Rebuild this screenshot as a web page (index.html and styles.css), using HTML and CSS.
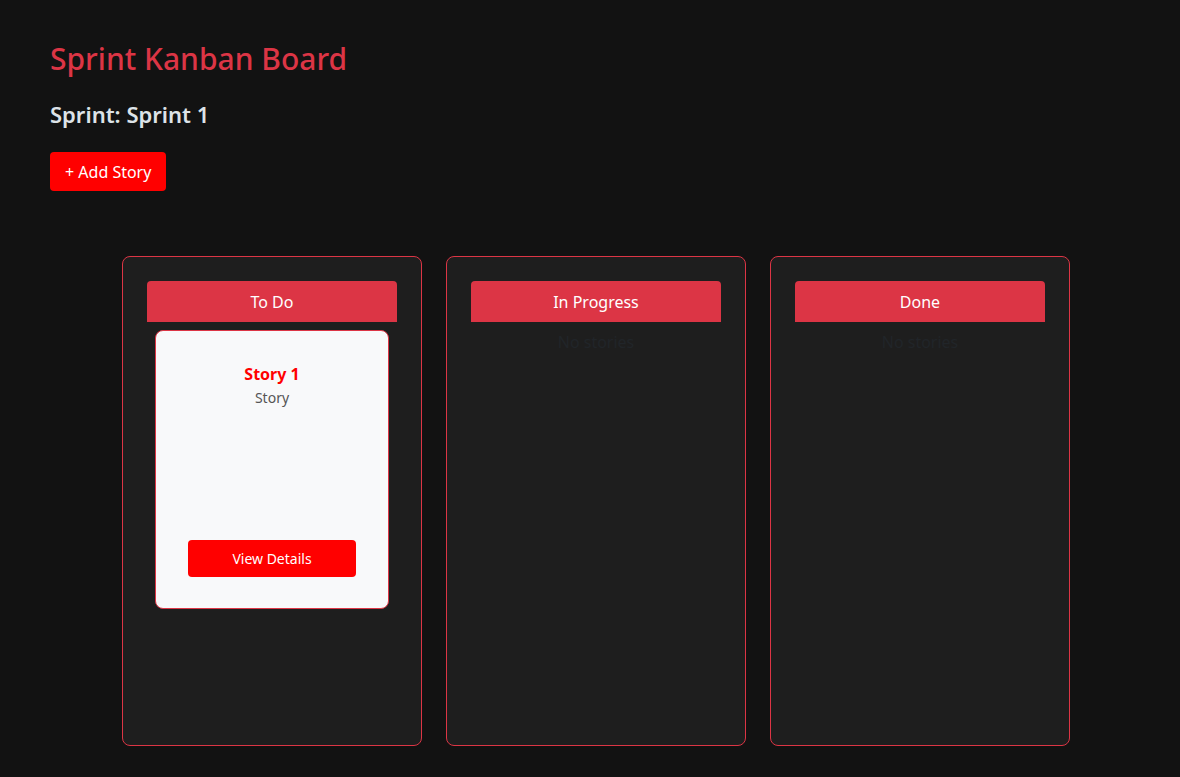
FILE: index.html
```html
<!DOCTYPE html>
<html lang="en">
<head>
<meta charset="utf-8">
<title>Sprint Kanban Board</title>
<link rel="stylesheet" href="styles.css">
</head>
<body>
<div class="page">
  <h1 class="title">Sprint Kanban Board</h1>
  <h2 class="subtitle">Sprint: Sprint 1</h2>
  <button class="add-btn">+ Add Story</button>
  <div class="board">
    <section class="column">
      <div class="col-header">To Do</div>
      <div class="card">
        <div class="card-body">
          <div class="card-title">Story 1</div>
          <div class="card-type">Story</div>
        </div>
        <button class="details-btn">View Details</button>
      </div>
    </section>
    <section class="column">
      <div class="col-header">In Progress</div>
      <div class="empty">No stories</div>
    </section>
    <section class="column">
      <div class="col-header">Done</div>
      <div class="empty">No stories</div>
    </section>
  </div>
</div>
</body>
</html>
```

FILE: styles.css
```css
* { box-sizing: border-box; }
html, body {
  margin: 0;
  padding: 0;
  background: #121212;
}
body {
  font-family: "Noto Sans", "Open Sans", "Liberation Sans", sans-serif;
  color: #e0e0e0;
}
.page {
  padding: 41px 50px 0 50px;
}
.title {
  margin: 0;
  font-size: 30px;
  font-weight: 500;
  line-height: 36px;
  color: #dc3545;
}
.subtitle {
  margin: 24px 0 0 0;
  font-size: 22px;
  font-weight: 600;
  line-height: 27px;
  color: #dde3e8;
}
.add-btn {
  margin-top: 24px;
  height: 39px;
  padding: 0 15px;
  border: none;
  border-radius: 4px;
  background: #ff0000;
  color: #ffffff;
  font-family: inherit;
  font-size: 16px;
  cursor: pointer;
}
.board {
  display: flex;
  justify-content: center;
  gap: 24px;
  margin-top: 65px;
  padding-left: 12px;
}
.column {
  width: 300px;
  height: 490px;
  padding: 24px;
  background: #1e1e1e;
  border: 1px solid #dc3545;
  border-radius: 8px;
}
.col-header {
  height: 41px;
  display: flex;
  align-items: center;
  justify-content: center;
  background: #dc3545;
  color: #ffffff;
  font-size: 16px;
  border-radius: 4px 4px 0 0;
}
.card {
  margin: 8px;
  height: 279px;
  padding: 31px 32px 31px;
  background: #f8f9fa;
  border: 1px solid #dc3545;
  border-radius: 8px;
  display: flex;
  flex-direction: column;
  justify-content: space-between;
  text-align: center;
}
.card-title {
  color: #ff0000;
  font-weight: 700;
  font-size: 16px;
  line-height: 24px;
}
.card-type {
  color: #555555;
  font-size: 14px;
  line-height: 24px;
}
.details-btn {
  width: 100%;
  height: 37px;
  border: none;
  border-radius: 4px;
  background: #ff0000;
  color: #ffffff;
  font-family: inherit;
  font-size: 14px;
  cursor: pointer;
}
.empty {
  margin-top: 8px;
  text-align: center;
  font-size: 16px;
  line-height: 24px;
  color: #212529;
}
```
